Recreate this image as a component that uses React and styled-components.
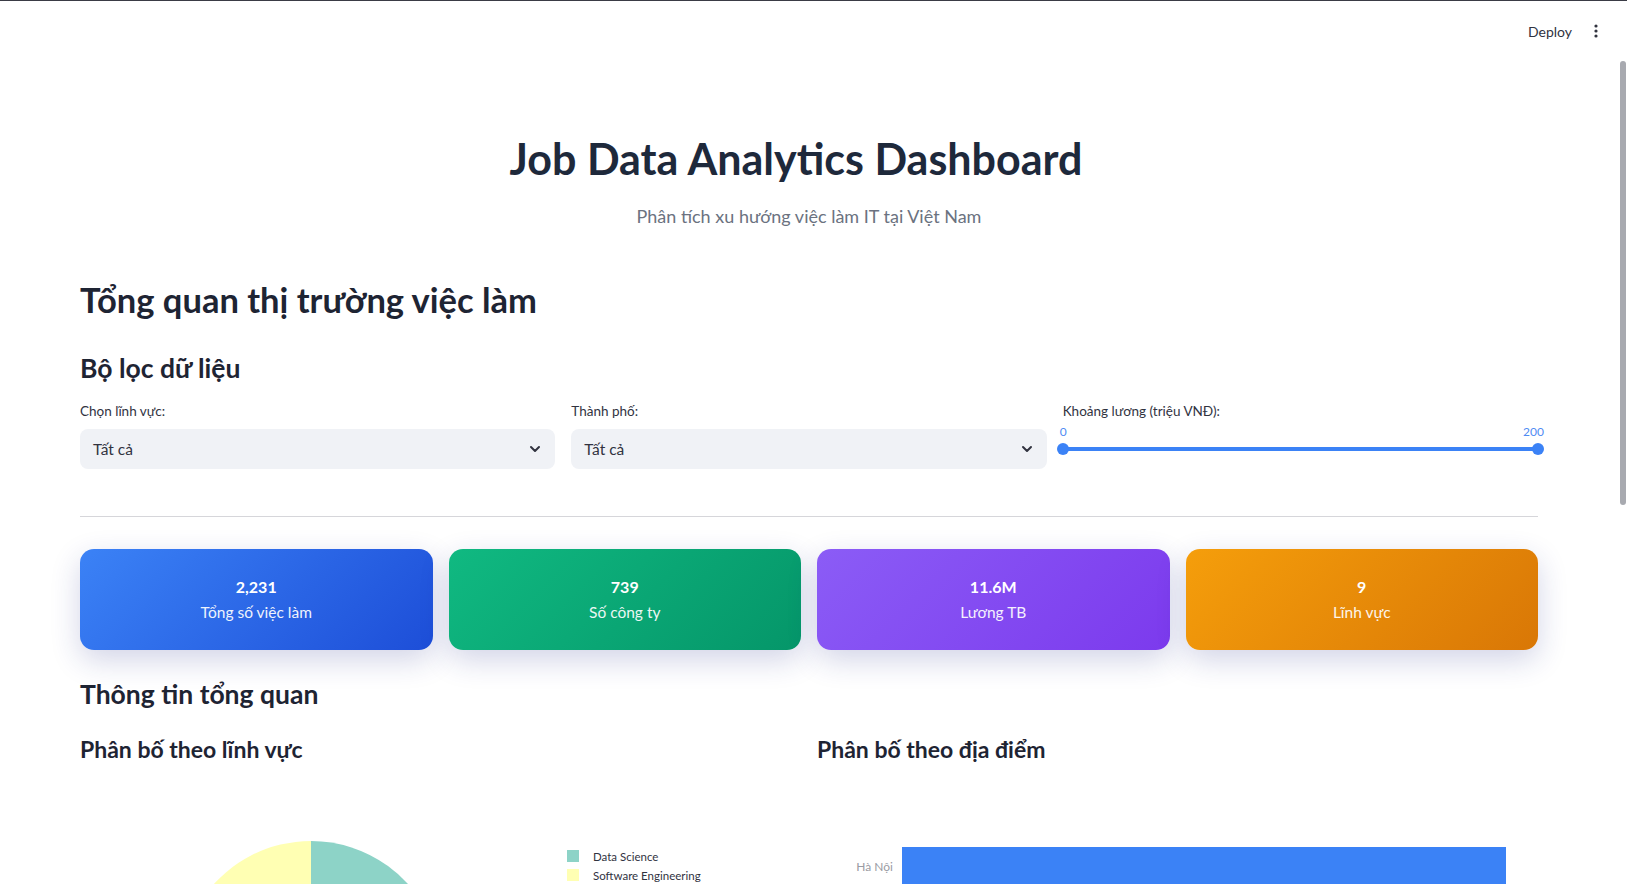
import React from "react";
import styled, { createGlobalStyle } from "styled-components";

const GlobalStyle = createGlobalStyle`
  html, body {
    margin: 0;
    padding: 0;
    overflow: hidden;
    background: #ffffff;
  }
  body {
    font-family: Lato, "Noto Sans", sans-serif;
    color: #31333f;
  }
  * {
    box-sizing: border-box;
  }
`;

const AppFrame = styled.div`
  position: relative;
  height: 100vh;
  overflow: hidden;
  border-top: 1px solid #3a3b45;
`;

const Header = styled.header`
  position: absolute;
  top: 0;
  left: 0;
  right: 0;
  height: 60px;
  display: flex;
  align-items: center;
  justify-content: flex-end;
  gap: 22px;
  padding-right: 29px;
  z-index: 5;
`;

const DeployButton = styled.span`
  font-size: 14px;
  color: #31333f;
`;

const ScrollThumb = styled.div`
  position: absolute;
  top: 60px;
  right: 1px;
  width: 6px;
  height: 444px;
  border-radius: 3px;
  background: #a8aab0;
  z-index: 5;
`;

const Main = styled.main`
  padding: 130px 89px 0 80px;
`;

const Title = styled.h1`
  margin: 0;
  text-align: center;
  font-size: 43px;
  line-height: 55px;
  font-weight: 700;
  color: #1e293b;
  padding-right: 26px;
`;

const Subtitle = styled.p`
  margin: 17px 0 0;
  text-align: center;
  font-size: 18px;
  line-height: 27px;
  color: #6b7280;
`;

const SectionTitle = styled.h2`
  margin: ${(p) => p.$mt}px 0 0;
  font-size: ${(p) => p.$size}px;
  line-height: ${(p) => p.$lh}px;
  font-weight: 700;
  color: #1e2433;
`;

const FilterRow = styled.div`
  display: grid;
  grid-template-columns: repeat(3, 1fr);
  gap: 16px;
  margin-top: 16px;
`;

const Field = styled.div`
  display: flex;
  flex-direction: column;
`;

const FieldLabel = styled.label`
  font-size: 13.5px;
  line-height: 20px;
  color: #31333f;
  margin-bottom: 8px;
`;

const Select = styled.div`
  height: 40px;
  border-radius: 8px;
  background: #f0f2f6;
  display: flex;
  align-items: center;
  justify-content: space-between;
  padding: 0 14px 0 13px;
  font-size: 15.5px;
  color: #31333f;
`;

const SliderBox = styled.div`
  position: relative;
  height: 40px;
  margin-top: -4px;
`;

const SliderValues = styled.div`
  display: flex;
  justify-content: space-between;
  font-size: 12px;
  line-height: 14px;
  color: #4f8bf3;
  margin: 0 -6px 0 -3px;
`;

const SliderTrack = styled.div`
  position: relative;
  height: 4px;
  margin-top: 8px;
  border-radius: 2px;
  background: #3b82f6;
`;

const SliderThumb = styled.span`
  position: absolute;
  top: -4px;
  width: 12px;
  height: 12px;
  border-radius: 50%;
  background: #3b82f6;
  ${(p) => (p.$end ? "right: -6px;" : "left: -6px;")}
`;

const Divider = styled.hr`
  margin: 47px 0 0;
  border: none;
  border-top: 1px solid #d6d6da;
`;

const CardRow = styled.div`
  display: grid;
  grid-template-columns: repeat(4, 1fr);
  gap: 16px;
  margin-top: 32px;
`;

const MetricCard = styled.div`
  height: 101px;
  border-radius: 14px;
  background: ${(p) => p.$bg};
  box-shadow: 0 10px 30px rgba(31, 38, 135, 0.2);
  display: flex;
  flex-direction: column;
  align-items: center;
  justify-content: center;
  color: #ffffff;
`;

const MetricValue = styled.div`
  font-size: 16px;
  font-weight: 700;
  line-height: 22px;
`;

const MetricLabel = styled.div`
  font-size: 15.5px;
  line-height: 22px;
  margin-top: 3px;
  opacity: 0.92;
`;

const ChartGrid = styled.div`
  display: grid;
  grid-template-columns: 1fr 1fr;
  gap: 16px;
  margin-top: 24px;
`;

const ChartTitle = styled.h4`
  margin: 0;
  font-size: 23px;
  line-height: 29px;
  font-weight: 700;
  color: #1e2433;
`;

const ChartSvg = styled.svg`
  display: block;
  margin-top: 26px;
  overflow: visible;
`;

const cards = [
  { value: "2,231", label: "Tổng số việc làm", bg: "linear-gradient(135deg, #3b82f6 0%, #1d4ed8 100%)" },
  { value: "739", label: "Số công ty", bg: "linear-gradient(135deg, #10b981 0%, #059669 100%)" },
  { value: "11.6M", label: "Lương TB", bg: "linear-gradient(135deg, #8b5cf6 0%, #7c3aed 100%)" },
  { value: "9", label: "Lĩnh vực", bg: "linear-gradient(135deg, #f59e0b 0%, #d97706 100%)" },
];

const fields = [
  { name: "Data Science", color: "#8dd3c7", share: 0.4 },
  { name: "Software Engineering", color: "#ffffb3", share: 0.3 },
  { name: "Design", color: "#bebada", share: 0.08 },
  { name: "Marketing", color: "#fb8072", share: 0.06 },
  { name: "Sales", color: "#80b1d3", share: 0.05 },
  { name: "Finance", color: "#fdb462", share: 0.04 },
  { name: "HR", color: "#b3de69", share: 0.03 },
  { name: "Operations", color: "#fccde5", share: 0.02 },
  { name: "Other", color: "#d9d9d9", share: 0.02 },
];

function slicePath(cx, cy, r, a0, a1) {
  const p = (a) => [cx + r * Math.sin(a), cy - r * Math.cos(a)];
  const [x0, y0] = p(a0);
  const [x1, y1] = p(a1);
  const large = a1 - a0 > Math.PI ? 1 : 0;
  return `M${cx},${cy} L${x0},${y0} A${r},${r} 0 ${large} 1 ${x1},${y1} Z`;
}

function PieChart() {
  // teal first clockwise from top, yellow ends at top from the left
  const order = [0, 2, 3, 4, 5, 6, 7, 8, 1];
  let angle = 0;
  const slices = order.map((i) => {
    const f = fields[i];
    const a0 = angle;
    angle += f.share * Math.PI * 2;
    return <path key={f.name} d={slicePath(231, 182, 131, a0, angle)} fill={f.color} />;
  });
  // only the first two legend rows fit above the fold
  return (
    <ChartSvg width="721" height="380">
      {slices}
      {fields.slice(0, 2).map((f, i) => (
        <g key={f.name} transform={`translate(487, ${60 + i * 19})`}>
          <rect x="0" y="0" width="12" height="12" fill={f.color} />
          <text x="26" y="10.5" fontSize="11.5" fill="#31333f" fontFamily="Lato, 'Noto Sans', sans-serif">
            {f.name}
          </text>
        </g>
      ))}
    </ChartSvg>
  );
}

function BarChart() {
  return (
    <ChartSvg width="721" height="380">
      <text x="76" y="81" fontSize="12" fill="#9a9ba3" textAnchor="end" fontFamily="Lato, 'Noto Sans', sans-serif">
        Hà Nội
      </text>
      <rect x="85" y="57" width="604" height="62" fill="#3b82f6" />
    </ChartSvg>
  );
}

const Chevron = () => (
  <svg width="12" height="8" viewBox="0 0 12 8">
    <path d="M2 2l4 4 4-4" fill="none" stroke="#31333f" strokeWidth="2" strokeLinecap="round" strokeLinejoin="round" />
  </svg>
);

export default function App() {
  return (
    <AppFrame>
      <GlobalStyle />
      <Header>
        <DeployButton>Deploy</DeployButton>
        <svg width="4" height="14" viewBox="0 0 4 14">
          <circle cx="2" cy="2" r="1.6" fill="#31333f" />
          <circle cx="2" cy="7" r="1.6" fill="#31333f" />
          <circle cx="2" cy="12" r="1.6" fill="#31333f" />
        </svg>
      </Header>
      <ScrollThumb />
      <Main>
        <Title>Job Data Analytics Dashboard</Title>
        <Subtitle>Phân tích xu hướng việc làm IT tại Việt Nam</Subtitle>

        <SectionTitle $size={34.5} $lh={44} $mt={48}>Tổng quan thị trường việc làm</SectionTitle>
        <SectionTitle $size={26.5} $lh={34} $mt={29}>Bộ lọc dữ liệu</SectionTitle>

        <FilterRow>
          <Field>
            <FieldLabel>Chọn lĩnh vực:</FieldLabel>
            <Select>
              <span>Tất cả</span>
              <Chevron />
            </Select>
          </Field>
          <Field>
            <FieldLabel>Thành phố:</FieldLabel>
            <Select>
              <span>Tất cả</span>
              <Chevron />
            </Select>
          </Field>
          <Field>
            <FieldLabel>Khoảng lương (triệu VNĐ):</FieldLabel>
            <SliderBox>
              <SliderValues>
                <span>0</span>
                <span>200</span>
              </SliderValues>
              <SliderTrack>
                <SliderThumb />
                <SliderThumb $end />
              </SliderTrack>
            </SliderBox>
          </Field>
        </FilterRow>

        <Divider />

        <CardRow>
          {cards.map((c) => (
            <MetricCard key={c.label} $bg={c.bg}>
              <MetricValue>{c.value}</MetricValue>
              <MetricLabel>{c.label}</MetricLabel>
            </MetricCard>
          ))}
        </CardRow>

        <SectionTitle $size={26.5} $lh={34} $mt={27}>Thông tin tổng quan</SectionTitle>

        <ChartGrid>
          <div>
            <ChartTitle>Phân bố theo lĩnh vực</ChartTitle>
            <PieChart />
          </div>
          <div>
            <ChartTitle>Phân bố theo địa điểm</ChartTitle>
            <BarChart />
          </div>
        </ChartGrid>
      </Main>
    </AppFrame>
  );
}
